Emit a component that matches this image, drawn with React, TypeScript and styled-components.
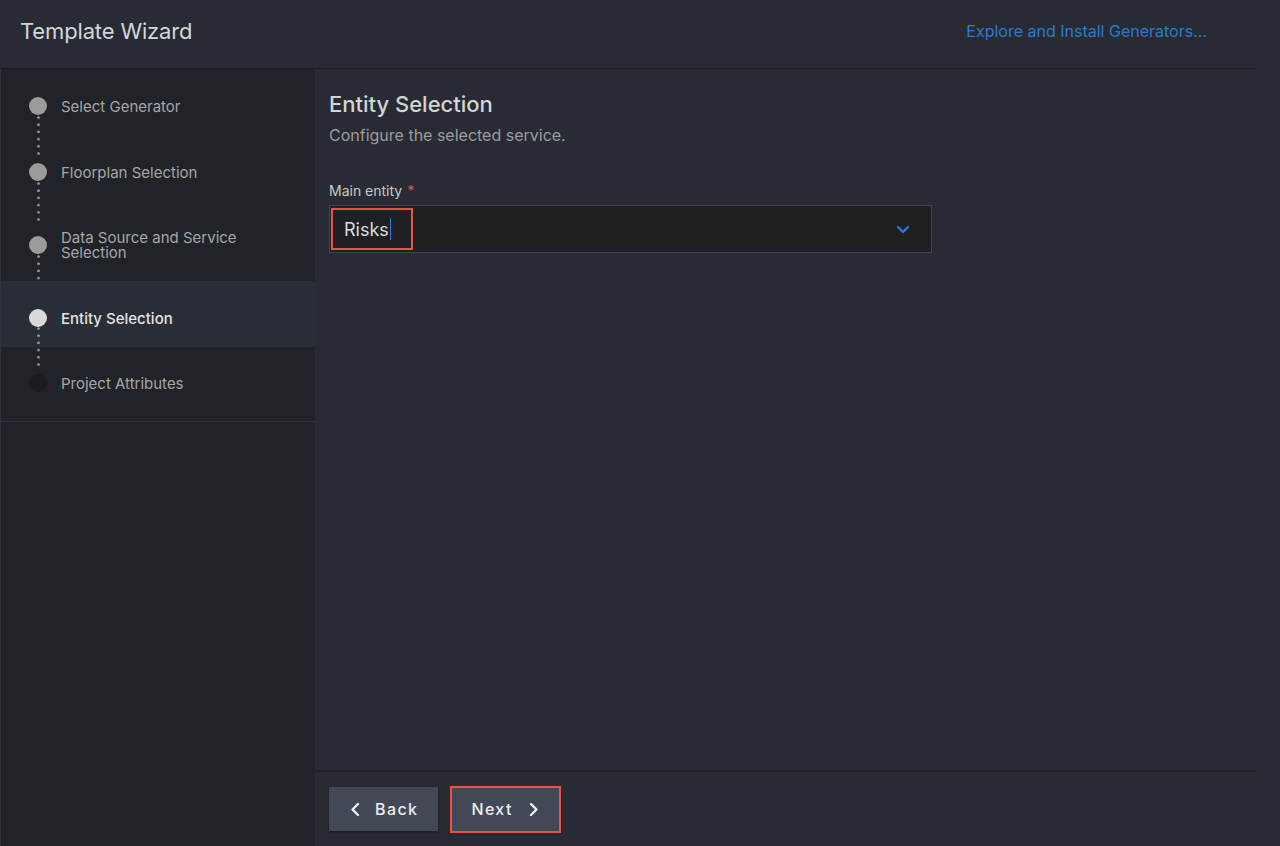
import React from "react";
import styled, { createGlobalStyle, css } from "styled-components";

const Global = createGlobalStyle`
  html, body { margin: 0; padding: 0; background: #282b33; }
  body { font-family: Inter, "Noto Sans", "Liberation Sans", sans-serif; -webkit-font-smoothing: antialiased; }
  #root { height: 846px; }
`;

const Page = styled.div`
  width: 1257px;
  height: 846px;
  display: flex;
  flex-direction: column;
  background: #282b33;
`;

const Header = styled.header`
  height: 69px;
  flex: none;
  box-sizing: border-box;
  display: flex;
  align-items: center;
  justify-content: space-between;
  padding: 0 50px 6px 20px;
  border-bottom: 1px solid #1d1f24;
`;

const Title = styled.h1`
  margin: 0;
  font-size: 22px;
  font-weight: 400;
  color: #d6d6d6;
  letter-spacing: -0.15px;
`;

const Link = styled.a`
  font-size: 16px;
  color: #2f7acc;
  text-decoration: none;
`;

const Body = styled.div`
  flex: 1;
  display: grid;
  grid-template-columns: 315px 1fr;
  min-height: 0;
`;

const Sidebar = styled.nav`
  background: #212329;
  border-left: 1px solid #30343d;
  box-sizing: border-box;
  padding-top: 1px;
`;

const StepList = styled.ol`
  list-style: none;
  margin: 0;
  padding: 0 0 8px;
  border-bottom: 1px solid #2f333b;
`;

const Step = styled.li<{ $active?: boolean; $tall?: boolean }>`
  position: relative;
  display: flex;
  align-items: center;
  gap: 14px;
  box-sizing: border-box;
  padding: ${(p) => (p.$active ? 8 : 6)}px 20px 0 28px;
  height: ${(p) => (p.$tall ? 79 : 66)}px;
  background: ${(p) => (p.$active ? "#292d35" : "transparent")};
`;

type State = "done" | "active" | "todo";

const Dot = styled.span<{ $state: State }>`
  flex: none;
  width: 18px;
  height: 18px;
  border-radius: 50%;
  background: ${(p) =>
    p.$state === "done" ? "#9b9b9b" : p.$state === "active" ? "#d9d9d9" : "#1b1c20"};
`;

const Connector = styled.span<{ $len: number }>`
  position: absolute;
  left: 35.5px;
  top: calc(50% + 13px);
  width: 3px;
  height: ${(p) => p.$len}px;
  background-image: radial-gradient(circle at 1.5px 1.5px, #8e8e8e 1.2px, transparent 1.5px);
  background-size: 3px 7.2px;
  background-repeat: repeat-y;
`;

const StepLabel = styled.span<{ $active?: boolean }>`
  font-size: 15px;
  line-height: 15px;
  color: ${(p) => (p.$active ? "#e4e4e4" : "#a6a6a6")};
  ${(p) => p.$active && css`font-weight: 500;`}
  max-width: 200px;
`;

const Main = styled.main`
  display: flex;
  flex-direction: column;
  min-height: 0;
`;

const Content = styled.section`
  flex: 1;
  padding: 21px 14px 0;
`;

const H2 = styled.h2`
  margin: 0;
  font-size: 22px;
  line-height: 28px;
  font-weight: 500;
  color: #d4d4d4;
`;

const Sub = styled.p`
  margin: 7px 0 0;
  font-size: 16px;
  line-height: 20px;
  color: #9c9c9c;
`;

const Field = styled.div`
  margin-top: 37px;
  width: 603px;
`;

const Label = styled.label`
  display: block;
  font-size: 14px;
  line-height: 18px;
  color: #c9c9c9;
  margin-bottom: 5px;
`;

const Req = styled.span`
  color: #e5534b;
  margin-left: 5px;
`;

const Select = styled.div`
  height: 48px;
  box-sizing: border-box;
  background: #1f2024;
  border: 1px solid #41454f;
  display: flex;
  align-items: center;
  justify-content: space-between;
  padding: 1px 21px 1px 1px;
`;

const Value = styled.div`
  height: 42px;
  width: 82px;
  box-sizing: border-box;
  border: 2px solid #e8524a;
  display: flex;
  align-items: center;
  padding-left: 11px;
  font-size: 18px;
  color: #dcdcdc;
`;

const Caret = styled.span`
  display: inline-block;
  width: 1px;
  height: 22px;
  background: #2f7acc;
  margin-left: 1px;
`;

const Footer = styled.footer`
  height: 76px;
  flex: none;
  box-sizing: border-box;
  border-top: 2px solid #212329;
  display: flex;
  align-items: center;
  gap: 12px;
  padding: 0 14px;
`;

const Button = styled.button<{ $focus?: boolean }>`
  height: ${(p) => (p.$focus ? 47 : 44)}px;
  box-sizing: border-box;
  background: #424856;
  border: ${(p) => (p.$focus ? "2px solid #e8524a" : "none")};
  color: #ededed;
  font-family: inherit;
  font-size: 16px;
  font-weight: 500;
  letter-spacing: 1.4px;
  display: flex;
  align-items: center;
  gap: 14px;
  padding: 0 20px 0 ${(p) => (p.$focus ? 19 : 20)}px;
  cursor: pointer;
  box-shadow: ${(p) => (p.$focus ? "none" : "0 1px 2px rgba(0,0,0,0.4)")};
`;

const Chevron = ({ dir }: { dir: "left" | "right" | "down" }) => {
  const d =
    dir === "left" ? "M9 2 L3.5 7.5 L9 13" : dir === "right" ? "M4 2 L9.5 7.5 L4 13" : "M2 4.5 L7 9.5 L12 4.5";
  const color = dir === "down" ? "#2f7acc" : "#eeeeee";
  return (
    <svg width={dir === "down" ? 14 : 12} height="15" viewBox={dir === "down" ? "0 0 14 14" : "0 0 12 15"}>
      <path d={d} fill="none" stroke={color} strokeWidth="2.4" strokeLinecap="round" strokeLinejoin="round" />
    </svg>
  );
};

const steps: { label: string; state: State; tall?: boolean; line?: number }[] = [
  { label: "Select Generator", state: "done", line: 40 },
  { label: "Floorplan Selection", state: "done", line: 40 },
  { label: "Data Source and Service Selection", state: "done", tall: true, line: 40 },
  { label: "Entity Selection", state: "active", line: 40 },
  { label: "Project Attributes", state: "todo" },
];

export default function App() {
  return (
    <>
      <Global />
      <Page>
        <Header>
          <Title>Template Wizard</Title>
          <Link href="#">Explore and Install Generators...</Link>
        </Header>
        <Body>
          <Sidebar>
            <StepList>
              {steps.map((s) => (
                <Step key={s.label} $active={s.state === "active"} $tall={s.tall}>
                  <Dot $state={s.state} />
                  <StepLabel $active={s.state === "active"}>{s.label}</StepLabel>
                  {s.line ? <Connector $len={s.line} /> : null}
                </Step>
              ))}
            </StepList>
          </Sidebar>
          <Main>
            <Content>
              <H2>Entity Selection</H2>
              <Sub>Configure the selected service.</Sub>
              <Field>
                <Label>
                  Main entity<Req>*</Req>
                </Label>
                <Select>
                  <Value>
                    Risks
                    <Caret />
                  </Value>
                  <Chevron dir="down" />
                </Select>
              </Field>
            </Content>
            <Footer>
              <Button>
                <Chevron dir="left" />
                Back
              </Button>
              <Button $focus>
                Next
                <Chevron dir="right" />
              </Button>
            </Footer>
          </Main>
        </Body>
      </Page>
    </>
  );
}
